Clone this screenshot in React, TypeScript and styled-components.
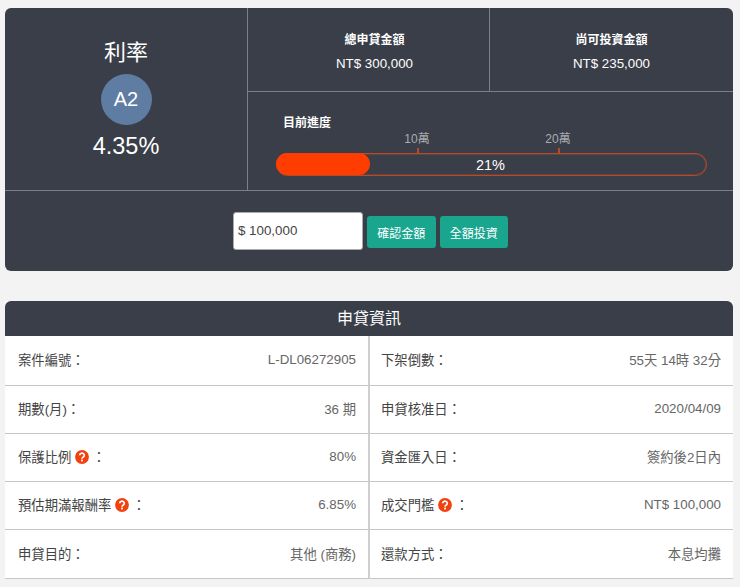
import React from "react";
import styled, { createGlobalStyle } from "styled-components";

const Global = createGlobalStyle`
  html, body { margin: 0; padding: 0; background: #f3f3f3; }
  body { font-family: "Liberation Sans", "Noto Sans CJK TC", sans-serif; width: 740px; height: 587px; overflow: hidden; }
  * { box-sizing: border-box; }
`;

const Page = styled.div`
  padding: 8px 7px 0 5px;
  display: flex;
  flex-direction: column;
  gap: 30px;
`;
const TopCard = styled.section`
  background: #393e48;
  border-radius: 6px;
  color: #fff;
  height: 263px;
  display: flex;
  flex-direction: column;
`;
const Upper = styled.div`
  display: flex;
  height: 183px;
  border-bottom: 1px solid #7b7f88;
`;
const RateCell = styled.div`
  width: 243px;
  border-right: 1px solid #7b7f88;
  display: flex;
  flex-direction: column;
  align-items: center;
  padding-top: 29px;
`;
const RateTitle = styled.div`
  font-size: 22px;
  line-height: 32px;
  height: 37px;
`;
const Grade = styled.div`
  width: 51px;
  height: 51px;
  border-radius: 50%;
  background: #5f7ca3;
  display: flex;
  align-items: center;
  justify-content: center;
  font-size: 20px;
`;
const RateValue = styled.div`
  font-size: 23.5px;
  line-height: 28px;
  margin-top: 7px;
`;
const Stats = styled.div`
  flex: 1;
  display: flex;
  flex-direction: column;
`;
const StatRow = styled.div`
  display: flex;
  height: 84px;
  border-bottom: 1px solid #7b7f88;
`;
const Stat = styled.div<{ $w: number; $pad: number }>`
  width: ${(p) => p.$w}px;
  display: flex;
  flex-direction: column;
  align-items: center;
  padding-top: 24px;
  padding-left: ${(p) => p.$pad}px;
  & + & { border-left: 1px solid #7b7f88; }
`;
const StatLabel = styled.div`
  font-size: 12px;
  font-weight: 700;
  line-height: 17px;
`;
const StatValue = styled.div`
  font-size: 13.33px;
  line-height: 20px;
  margin-top: 5px;
`;
const ProgressArea = styled.div`
  padding: 23px 26px 0 28px;
`;
const ProgressLabel = styled.div`
  font-size: 12px;
  font-weight: 700;
  line-height: 17px;
  padding-left: 7px;
`;
const Track = styled.div`
  position: relative;
  height: 23px;
  margin-top: 21px;
  border: 1px solid #b84a2a;
  box-shadow: inset 0 0 0 1px rgba(184, 74, 42, 0.35);
  border-radius: 12px;
  display: flex;
  align-items: center;
  justify-content: center;
  font-size: 14.5px;
`;
const Fill = styled.div<{ $w: number }>`
  position: absolute;
  left: -1px;
  top: -1px;
  bottom: 0;
  width: ${(p) => p.$w}px;
  background: #ff3d00;
  border-radius: 12px;
`;
const TrackText = styled.span`
  position: relative;
  left: -1px;
`;
const Tick = styled.div<{ $x: number }>`
  position: absolute;
  left: ${(p) => p.$x}px;
  top: -6px;
  width: 2px;
  height: 5px;
  background: #b84a2a;
`;
const TickLabel = styled.div<{ $x: number }>`
  position: absolute;
  left: ${(p) => p.$x}px;
  top: -23px;
  width: 40px;
  margin-left: -20px;
  text-align: center;
  font-size: 12px;
  line-height: 16px;
  color: #aaacb0;
`;
const Actions = styled.div`
  flex: 1;
  display: flex;
  align-items: center;
  justify-content: center;
  gap: 4px;
  padding-left: 3px;
`;
const AmountBox = styled.div`
  width: 130px;
  height: 38px;
  background: #fff;
  border: 1px solid #aaa;
  border-radius: 3px;
  color: #444;
  font-size: 13.33px;
  line-height: 36px;
  padding-left: 4px;
`;
const Button = styled.div`
  width: 68.5px;
  height: 32px;
  margin-top: 2px;
  background: #1aa58f;
  border-radius: 3px;
  color: #fff;
  font-size: 12px;
  display: flex;
  align-items: center;
  justify-content: center;
`;
const InfoCard = styled.section`
  background: #fff;
`;
const InfoHeader = styled.div`
  height: 35px;
  padding-bottom: 3px;
  background: #393e48;
  border-radius: 6px 6px 0 0;
  color: #fff;
  font-size: 16px;
  display: flex;
  align-items: center;
  justify-content: center;
`;
const Grid = styled.div`
  display: grid;
  grid-template-columns: 365px 1fr;
  grid-template-rows: 50px 48px 48px 48px 49px;
`;
const Cell = styled.div<{ $right?: boolean }>`
  display: flex;
  align-items: center;
  justify-content: space-between;
  padding: 0 12px 2px ${(p) => (p.$right ? 11 : 13)}px;
  border-bottom: 1px solid #c6c6c6;
  ${(p) => (p.$right ? "" : "border-right: 2px solid #cfcfcf;")}
  font-size: 13.33px;
`;
const Label = styled.span`
  color: #444;
  display: flex;
  align-items: center;
`;
const Value = styled.span`
  color: #666;
  font-size: 13.33px;
`;
const Help = styled.svg`
  width: 14px;
  height: 14px;
  margin: 0 3px 0 4px;
`;

const HelpIcon = () => (
  <Help viewBox="0 0 14 14">
    <circle cx="7" cy="7" r="6.9" fill="#f0410f" />
    <path d="M4.7 5.3a2.3 2.1 0 1 1 3.5 1.8c-.8.5-1.2.8-1.2 1.6" fill="none" stroke="#fff" strokeWidth="1.7" />
    <rect x="6.1" y="9.6" width="1.8" height="1.8" fill="#fff" />
  </Help>
);

type Row = { label: string; help?: boolean; value: string };
const rows: [Row, Row][] = [
  [{ label: "案件編號：", value: "L-DL06272905" }, { label: "下架倒數：", value: "55天 14時 32分" }],
  [{ label: "期數(月)：", value: "36 期" }, { label: "申貸核准日：", value: "2020/04/09" }],
  [{ label: "保護比例", help: true, value: "80%" }, { label: "資金匯入日：", value: "簽約後2日內" }],
  [{ label: "預估期滿報酬率", help: true, value: "6.85%" }, { label: "成交門檻", help: true, value: "NT$ 100,000" }],
  [{ label: "申貸目的：", value: "其他 (商務)" }, { label: "還款方式：", value: "本息均攤" }],
];

const LabelView = ({ r }: { r: Row }) => (
  <Label>
    {r.label}
    {r.help && <HelpIcon />}
    {r.help && "："}
  </Label>
);

export default function App() {
  return (
    <>
      <Global />
      <Page>
        <TopCard>
          <Upper>
            <RateCell>
              <RateTitle>利率</RateTitle>
              <Grade>A2</Grade>
              <RateValue>4.35%</RateValue>
            </RateCell>
            <Stats>
              <StatRow>
                <Stat $w={241} $pad={12}>
                  <StatLabel>總申貸金額</StatLabel>
                  <StatValue>NT$ 300,000</StatValue>
                </Stat>
                <Stat $w={244} $pad={0}>
                  <StatLabel>尚可投資金額</StatLabel>
                  <StatValue>NT$ 235,000</StatValue>
                </Stat>
              </StatRow>
              <ProgressArea>
                <ProgressLabel>目前進度</ProgressLabel>
                <Track>
                  <Fill $w={94} />
                  <TrackText>21%</TrackText>
                  <Tick $x={140} />
                  <TickLabel $x={140}>10萬</TickLabel>
                  <Tick $x={281} />
                  <TickLabel $x={281}>20萬</TickLabel>
                </Track>
              </ProgressArea>
            </Stats>
          </Upper>
          <Actions>
            <AmountBox>$ 100,000</AmountBox>
            <Button>確認金額</Button>
            <Button>全額投資</Button>
          </Actions>
        </TopCard>
        <InfoCard>
          <InfoHeader>申貸資訊</InfoHeader>
          <Grid>
            {rows.map((pair, i) => (
              <React.Fragment key={i}>
                <Cell>
                  <LabelView r={pair[0]} />
                  <Value>{pair[0].value}</Value>
                </Cell>
                <Cell $right>
                  <LabelView r={pair[1]} />
                  <Value>{pair[1].value}</Value>
                </Cell>
              </React.Fragment>
            ))}
          </Grid>
        </InfoCard>
      </Page>
    </>
  );
}
